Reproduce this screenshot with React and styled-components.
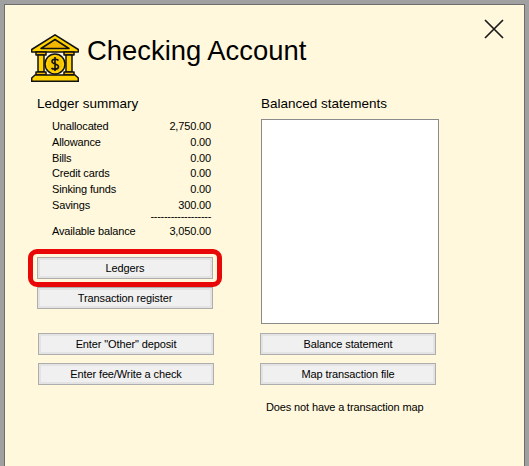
import React from 'react';
import styled, { createGlobalStyle } from 'styled-components';

const GlobalStyle = createGlobalStyle`
  html, body {
    margin: 0;
    padding: 0;
    background: #a0a0a0;
  }
  body {
    font-family: "Liberation Sans", Arial, sans-serif;
  }
`;

const Page = styled.div`
  width: 529px;
  height: 466px;
  box-sizing: border-box;
  padding: 4px 4px 0 4px;
  overflow: hidden;
`;

const Window = styled.div`
  position: relative;
  height: 100%;
  box-sizing: border-box;
  border: 1px solid #6d6d6d;
  border-bottom: 0;
  background: #fff8dc;
  padding: 29px 0 0 26px;
  color: #000;
`;

const CloseIcon = styled.svg`
  position: absolute;
  top: 13px;
  left: 478px;
  width: 22px;
  height: 22px;
`;

const Header = styled.header`
  display: flex;
  align-items: flex-start;
  gap: 8px;
  height: 60px;
`;

const BankIcon = styled.svg`
  width: 48px;
  height: 48px;
  flex: none;
`;

const Title = styled.h1`
  margin: 1px 0 0;
  font-size: 27.4px;
  line-height: 32px;
  font-weight: 400;
`;

const Columns = styled.div`
  display: flex;
  margin-left: 6px;
`;

const LeftColumn = styled.section`
  width: 224px;
  display: flex;
  flex-direction: column;
`;

const RightColumn = styled.section`
  display: flex;
  flex-direction: column;
`;

const Heading = styled.h2`
  margin: 0 0 ${p => p.$gap}px;
  font-size: 13.5px;
  line-height: 20px;
  font-weight: 400;
`;

const Summary = styled.div`
  width: 159px;
  margin-left: 15px;
  font-size: 11px;
  letter-spacing: -0.15px;
`;

const Row = styled.div`
  display: flex;
  justify-content: space-between;
  height: 15.8px;
  line-height: 16px;
`;

const Divider = styled.div`
  height: 10.2px;
  line-height: 6px;
  text-align: right;
  letter-spacing: -0.3px;
  white-space: nowrap;
`;

const Highlight = styled.div`
  position: relative;
  width: 176px;
  margin-top: 18px;
`;

const HighlightRing = styled.div`
  position: absolute;
  inset: -8px -9px;
  border: 5px solid #e80808;
  border-radius: 9px;
  pointer-events: none;
`;

const ActionButton = styled.button`
  display: block;
  width: 176px;
  height: 22px;
  margin: ${p => p.$top || 0}px 0 0 ${p => p.$left || 0}px;
  padding: 0;
  box-sizing: border-box;
  border: 1px solid #adadad;
  box-shadow: inset 0 0 0 2px #e3e3e3;
  background: #f0f0f0;
  font-family: "Liberation Sans", Arial, sans-serif;
  font-size: 11px;
  letter-spacing: -0.12px;
  color: #000;
`;

const StatementBox = styled.div`
  width: 176px;
  height: 203px;
  border: 1px solid #8a8a8a;
  background: #fff;
`;

const MapNote = styled.p`
  margin: 14px 0 0 5px;
  font-size: 11px;
  letter-spacing: -0.13px;
  line-height: 16px;
`;

const ledger = [
  ['Unallocated', '2,750.00'],
  ['Allowance', '0.00'],
  ['Bills', '0.00'],
  ['Credit cards', '0.00'],
  ['Sinking funds', '0.00'],
  ['Savings', '300.00'],
];

const Bank = () => (
  <BankIcon viewBox="0 0 48 48">
    <g stroke="#111" strokeWidth="1.5" strokeLinejoin="round">
      <path d="M24 0.8 L47.300 15.500 V18 H0.700 V15.500 Z" fill="#ffd200" />
      <path d="M24 5.500 L38 14.500 H10 Z" fill="#f5b800" />
      <rect x="5" y="18" width="10" height="3" fill="#f5b800" />
      <rect x="33" y="18" width="10" height="3" fill="#f5b800" />
      <rect x="7" y="21" width="6" height="17" fill="#ffd200" />
      <rect x="35" y="21" width="6" height="17" fill="#ffd200" />
      <rect x="5" y="38" width="10" height="3" fill="#f5b800" />
      <rect x="33" y="38" width="10" height="3" fill="#f5b800" />
      <path d="M4 41 H44 L47.300 44 V47.300 H0.700 V44 Z" fill="#ffd200" />
      <circle cx="24" cy="30" r="10" fill="#ffd200" />
      <circle cx="24" cy="30" r="7.500" fill="#f5c400" strokeWidth="0" />
    </g>
    <path d="M27.500 26.500 C26.500 25 21 24.500 21 27.500 C21 30.500 27.500 29.500 27.500 32.800 C27.500 36 21.500 35.500 20.500 34 M24 23 V37" fill="none" stroke="#111" strokeWidth="1.6" />
  </BankIcon>
);

export default function App() {
  return (
    <Page>
      <GlobalStyle />
      <Window>
        <CloseIcon viewBox="0 0 22 22">
          <path d="M2 2 L20 20 M20 2 L2 20" stroke="#1a1a1a" strokeWidth="1.7" fill="none" />
        </CloseIcon>
        <Header>
          <Bank />
          <Title>Checking Account</Title>
        </Header>
        <Columns>
          <LeftColumn>
            <Heading $gap={4}>Ledger summary</Heading>
            <Summary>
              {ledger.map(([label, value]) => (
                <Row key={label}>
                  <span>{label}</span>
                  <span>{value}</span>
                </Row>
              ))}
              <Divider>------------------</Divider>
              <Row>
                <span>Available balance</span>
                <span>3,050.00</span>
              </Row>
            </Summary>
            <Highlight>
              <ActionButton>Ledgers</ActionButton>
              <HighlightRing />
            </Highlight>
            <ActionButton $top={8}>Transaction register</ActionButton>
            <ActionButton $top={24} $left={1}>Enter "Other" deposit</ActionButton>
            <ActionButton $top={8} $left={1}>Enter fee/Write a check</ActionButton>
          </LeftColumn>
          <RightColumn>
            <Heading $gap={5}>Balanced statements</Heading>
            <StatementBox />
            <ActionButton $top={9} $left={-1}>Balance statement</ActionButton>
            <ActionButton $top={8} $left={-1}>Map transaction file</ActionButton>
            <MapNote>Does not have a transaction map</MapNote>
          </RightColumn>
        </Columns>
      </Window>
    </Page>
  );
}
